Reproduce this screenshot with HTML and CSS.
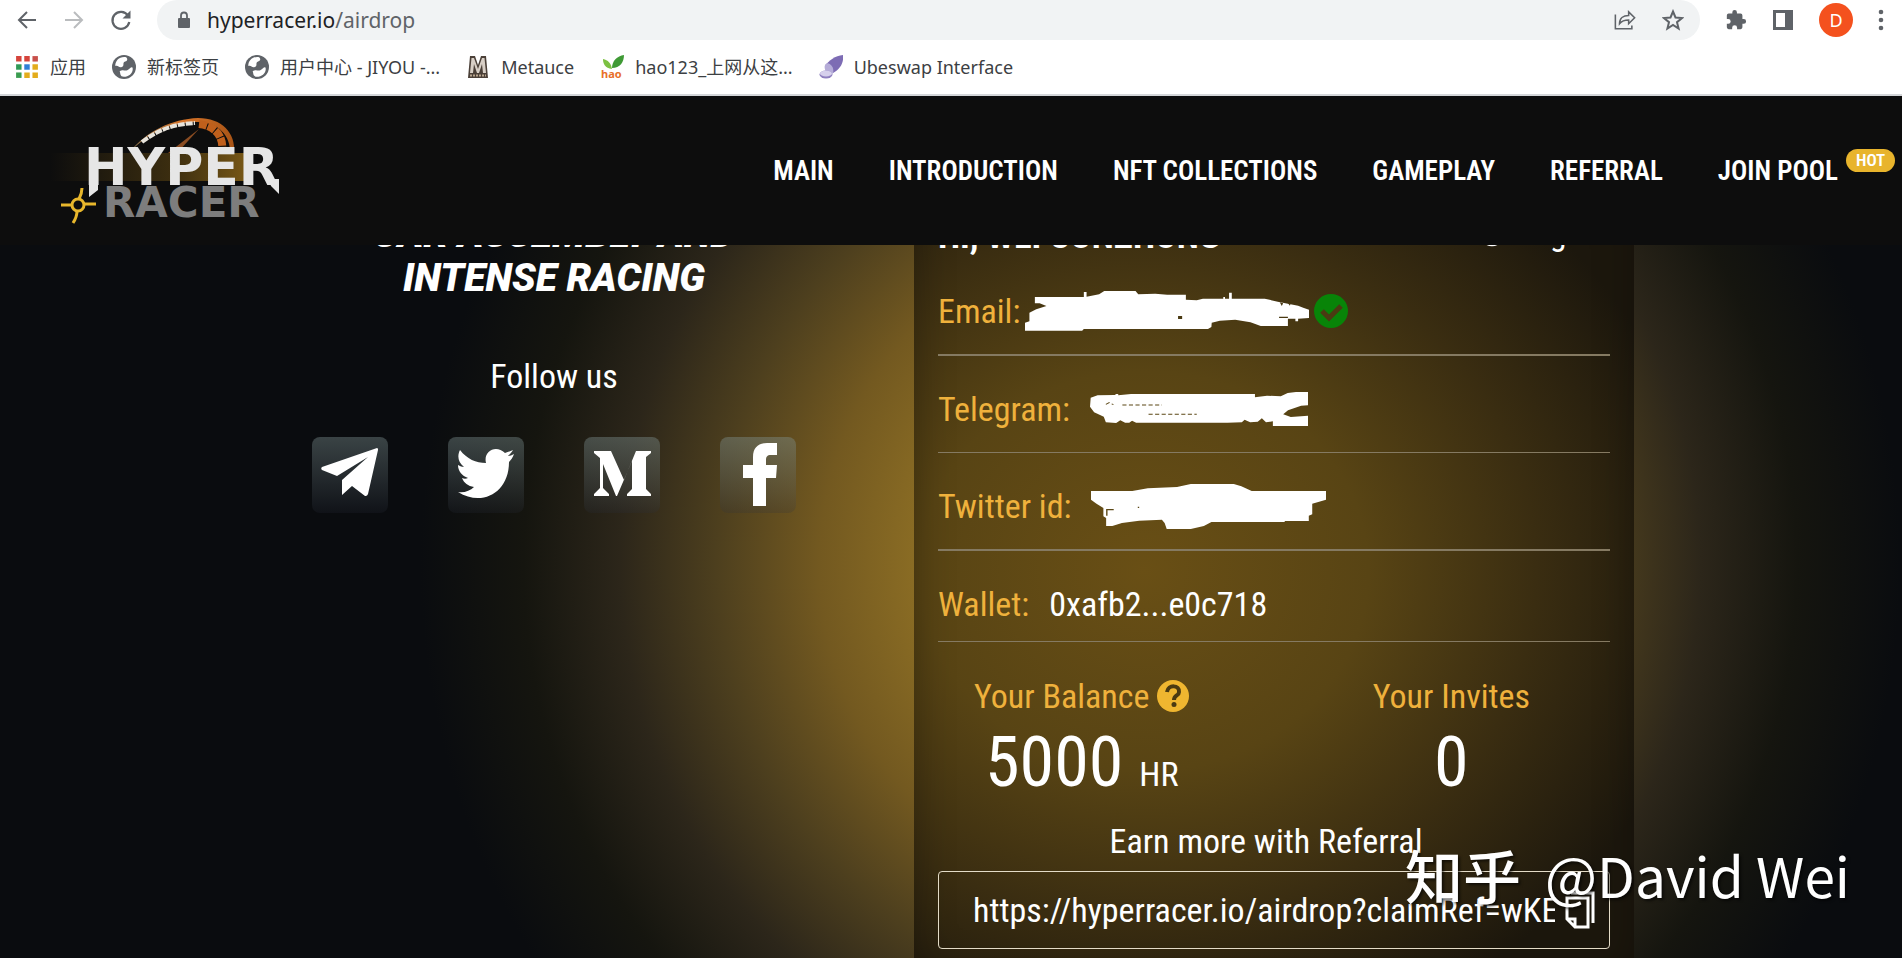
FILE: index.html
```html
<!DOCTYPE html>
<html lang="en">
<head>
    <meta charset="UTF-8">
    <meta name="viewport" content="width=device-width, initial-scale=1.0">
    <title>Hyper Racer Airdrop</title>
    <link rel="stylesheet" href="styles.css">
</head>
<body>

    <div class="browser">
        <div class="toolbar">
            <button class="tool" aria-label="Back">
                <svg viewBox="0 0 22 22" fill="none" stroke="#5f6368" stroke-width="2"><path d="M20 11H3M11 3L3 11l8 8"/></svg>
            </button>
            <button class="tool" aria-label="Forward">
                <svg viewBox="0 0 22 22" fill="none" stroke="#babcbe" stroke-width="2"><path d="M2 11h17M11 3l8 8-8 8"/></svg>
            </button>
            <button class="tool" aria-label="Reload">
                <svg viewBox="0 0 22 22"><path d="M18 6.500A8.500 8.500 0 1 0 19.300 13" fill="none" stroke="#5f6368" stroke-width="2.200"/><path d="M20.500 1.500v8h-8z" fill="#5f6368"/></svg>
            </button>
            <div class="address">
                <svg class="lock" viewBox="0 0 14 18"><rect x="1" y="7" width="12" height="10" rx="1" fill="#5f6368"/><path d="M4 7V4.500a3 3 0 0 1 6 0V7" fill="none" stroke="#5f6368" stroke-width="1.800"/></svg>
                <span class="url">hyperracer.io<span class="path">/airdrop</span></span>
                <button class="tool" aria-label="Share">
                    <svg viewBox="0 0 24 22" fill="none" stroke="#5f6368" stroke-width="1.700"><path d="M1.500 5v15.500h18V17M6 15c0-6 4-9 10-9V2l6.500 6.500L16 15v-4c-5 0-7.500 1-10 4z"/></svg>
                </button>
                <button class="tool" aria-label="Bookmark this page">
                    <svg viewBox="0 0 22 22" fill="none" stroke="#5f6368" stroke-width="2"><path d="M11 2.500l2.500 6 6.500.5-5 4.200 1.600 6.300L11 16l-5.600 3.500L7 13.200 2 9l6.500-.5z"/></svg>
                </button>
            </div>
            <button class="tool" aria-label="Extensions">
                <svg viewBox="0 0 24 24" fill="#5f6368"><path d="M20.500 11H19V7a2 2 0 0 0-2-2h-4V3.500a2.500 2.500 0 0 0-5 0V5H4a2 2 0 0 0-2 2v3.800h1.500a2.700 2.700 0 0 1 0 5.400H2V20a2 2 0 0 0 2 2h3.800v-1.500a2.700 2.700 0 0 1 5.400 0V22H17a2 2 0 0 0 2-2v-4h1.500a2.500 2.500 0 0 0 0-5z"/></svg>
            </button>
            <button class="tool" aria-label="Side panel">
                <svg viewBox="0 0 22 22"><path d="M1 1h20v20H1z" fill="#5f6368"/><path d="M4 4h9v14H4z" fill="#fff"/></svg>
            </button>
            <button class="avatar">D</button>
            <button class="dots" aria-label="Menu">
                <svg viewBox="0 0 6 22" fill="#5f6368"><circle cx="3" cy="3" r="2.300"/><circle cx="3" cy="11" r="2.300"/><circle cx="3" cy="19" r="2.300"/></svg>
            </button>
        </div>

        <div class="bookmarks">
            <a href="#">
                <svg viewBox="0 0 22 22"><path d="M1 1h5v5H1zM8.500 1h5v5h-5z" fill="#d5443c"/><path d="M16 1h5v5h-5z" fill="#c8504a"/><path d="M1 8.500h5v5H1z" fill="#2f9a57"/><path d="M8.500 8.500h5v5h-5z" fill="#2f7fd6"/><path d="M16 8.500h5v5h-5zM16 16h5v5h-5zM8.500 16h5v5h-5z" fill="#e3ac1c"/><path d="M1 16h5v5H1z" fill="#3a9c50"/></svg>
                应用
            </a>
            <a href="#">
                <svg viewBox="0 0 22 22"><circle cx="11" cy="11" r="11" fill="#5f6368"/><path d="M3 10c3-1 3 2 6 1s0-4 3-5 2-3 1-4C7 1 3 5 3 10zM7 15c3-2 5 0 7-1s5-5 5-1-4 7-8 7-3-3-4-5z" fill="#fff"/></svg>
                新标签页
            </a>
            <a href="#">
                <svg viewBox="0 0 22 22"><circle cx="11" cy="11" r="11" fill="#5f6368"/><path d="M3 10c3-1 3 2 6 1s0-4 3-5 2-3 1-4C7 1 3 5 3 10zM7 15c3-2 5 0 7-1s5-5 5-1-4 7-8 7-3-3-4-5z" fill="#fff"/></svg>
                用户中心 - JIYOU -...
            </a>
            <a href="#">
                <svg viewBox="0 0 22 24"><path d="M3 1h5l3 9 3-9h5l2 22H1z" fill="#4b4038"/><path d="M4.500 3H7l4 11 4-11h2.500L19 18h-3l-1-9-3 9h-2L7 9l-1 9H3z" fill="#d8cfc6"/><path d="M3 20.500h16" stroke="#b9a58e" stroke-width="2" stroke-dasharray="2 1"/></svg>
                Metauce
            </a>
            <a href="#">
                <svg viewBox="0 0 24 24"><path d="M12 13C12 6 17 1 24 0c0 7-4 13-12 13z" fill="#3f9a35"/><path d="M12 14C5 13 3 9 3 4c5 1 8 4 9 10z" fill="#7cc142"/><text class="hao" x="1" y="23">hao</text></svg>
                hao123_上网从这...
            </a>
            <a href="#">
                <svg viewBox="0 0 24 24"><path d="M24 0c1 8-3 14-10 18L6 11C10 5 16 1 24 0z" fill="#7d6cb4"/><ellipse cx="10" cy="14" rx="4" ry="6" transform="rotate(-25 10 14)" fill="#b5acd8"/><ellipse cx="7" cy="19.500" rx="6.500" ry="4" fill="#8f80bf"/><ellipse cx="7" cy="18.500" rx="6" ry="3" fill="#d6d0ec"/></svg>
                Ubeswap Interface
            </a>
        </div>
    </div>

    <header class="site-header">
        <a class="logo" href="#" aria-label="Hyper Racer">
            <svg viewBox="0 0 240 116" width="240" height="116">
                <defs>
                    <linearGradient id="stripe"><stop offset="0" stop-color="#8a6414" stop-opacity="0"/><stop offset=".6" stop-color="#8a6414" stop-opacity=".6"/><stop offset="1" stop-color="#c08a1c"/></linearGradient>
                    <linearGradient id="gauge"><stop offset="0" stop-color="#7a6a4a"/><stop offset=".5" stop-color="#d9762a"/><stop offset="1" stop-color="#a85416"/></linearGradient>
                </defs>
                <path d="M0 40h196v28H0z" fill="url(#stripe)" opacity=".6"/>
                <path d="M79 40C96 18 122 6 148 5c24 0 38 15 36 35h-4c1-17-12-31-32-31-24 0-48 9-69 31z" fill="url(#gauge)"/>
                <path d="M92 29c17-13 33-18 53-19" fill="none" stroke="#e8e4dc" stroke-width="4" stroke-dasharray="7 1"/>
                <path d="M149 11c17 2 25 13 23 28" fill="none" stroke="#c0601c" stroke-width="8" stroke-dasharray="8 1"/>
                <path d="M149 16l-22 24h-9z" fill="#8a4c22"/>
                <path d="M39 60h9v17l-9 7zM218 66h11v15l-8-8z" fill="#e6e6e6"/>
                <text class="logo-top" x="34" y="72">HYPER</text>
                <text class="logo-bottom" x="53" y="104">RACER</text>
                <g fill="none" stroke="#e8b72c" stroke-width="3"><circle cx="28" cy="92" r="6"/><path d="M29 86c2-4 3-7 3-11M34 91h12M27 98c0 4-2 9-4 12M22 92H11"/></g>
            </svg>
        </a>
        <nav class="menu">
            <a href="#">MAIN</a>
            <a href="#">INTRODUCTION</a>
            <a href="#">NFT COLLECTIONS</a>
            <a href="#">GAMEPLAY</a>
            <a href="#">REFERRAL</a>
            <a href="#" class="join">JOIN POOL<span class="hot">HOT</span></a>
        </nav>
    </header>

    <main class="hero">
        <div class="container">
            <section class="intro">
                <h1>CAR ASSEMBLY AND<br>INTENSE RACING</h1>
                <p class="follow">Follow us</p>
                <div class="socials">
                    <a href="#" aria-label="Telegram">
                        <svg viewBox="0 0 76 76" fill="#fff"><path d="M65 11L10 30c-1 1-1 2 0 3l15 6 31-19-26 23v15l10-9 13 10c1 0 2 0 3-2l10-44c0-1 0-2-1-2z"/></svg>
                    </a>
                    <a href="#" aria-label="Twitter">
                        <svg viewBox="0 0 76 76" fill="#fff"><path d="M66 17c-2 1-4 2-6 2 2-2 4-4 5-6-2 1-5 2-8 3-9-9-22-2-19 10-10 0-19-4-26-13-3 6-2 12 4 17-2 0-4-1-6-2 0 6 4 11 10 13-2 1-4 1-6 0 2 5 6 8 12 9-4 4-10 6-16 5 24 15 51 1 51-30 2-2 4-5 5-8z"/></svg>
                    </a>
                    <a href="#" aria-label="Medium">
                        <svg viewBox="0 0 76 76" fill="#fff"><path d="M10 14h17l13 29 12-29h15v2l-5 4v32l5 5v2H43v-2l5-5V24L33 59h-1L19 27v24l6 6v2H10v-2l6-6V21l-6-5z"/></svg>
                    </a>
                    <a href="#" aria-label="Facebook">
                        <svg viewBox="0 0 76 76" fill="#fff"><path d="M33 69V41H23V28h10V20C33 10 39 6 47 6h10v12h-6c-4 0-5 2-5 5v5h11l-1 13H46v28z"/></svg>
                    </a>
                </div>
            </section>

            <section class="card">
                <div class="card-head">
                    <h2>HI, WEI CONZHONG</h2>
                    <button class="logout">
                        <svg viewBox="0 0 32 32" width="28" height="28" fill="none" stroke="#fff" stroke-width="3"><path d="M10 5a13 13 0 1 0 12 0M16 1v14"/></svg>
                        Logout
                    </button>
                </div>

                <div class="row email">
                    <span class="label">Email:</span>
                    <svg class="mark" viewBox="357 195 835 123" width="284" height="41" preserveAspectRatio="none" fill="#fff"><path d="M386 213H530V198h8v14l37-7 15-10h92l8 10 50-2 35 3h55v15l32 2 18-5h60v-5h5v5h12v-18h8v18h97l38 9 60 12 15 6 17 6v25l-32 2v8h-8v-8h-22v22h-80l-30-11-45-8-45 3-24 6-1 13-10 6H530l-5 5H357v-24l13-4v-26l20-10 30-10-20-8h-14z"/><path d="M807 270h12v9h-12zM1104 272h26v4h-26zM1106 229l10 3-4 8zM1128 229l10 2-2 8z" fill="#4a3a12"/></svg>
                    <svg viewBox="0 0 34 34" width="34" height="34"><circle cx="17" cy="17" r="17" fill="#088408"/><path d="M8 17l7 7 12-12" fill="none" stroke="#4a3a12" stroke-width="5"/></svg>
                </div>
                <div class="row">
                    <span class="label">Telegram:</span>
                    <svg class="mark" viewBox="546 483 633 105" width="218" height="35" preserveAspectRatio="none" fill="#fff"><path d="M548 500l20-7 50-1 4-3h6v4l37-4h360v10l35-5 40 2 20-10 24-3h65v25l-20 14-30 2-38 14-14 12 22 8 52-4v-4h50v28l-12 7h-142v-14l-20 3-12-12-12 10-22 2-16-8-8 8-42 1H680l-12-6-8 6h-12l-14-7-12 8-30-2-6-17-28-13-12-17z"/><path d="M592 520l10-5 12 6M640 522h115M716 550h140" fill="none" stroke="#5b4715" stroke-width="3" stroke-dasharray="12 7"/></svg>
                </div>
                <div class="row">
                    <span class="label">Twitter id:</span>
                    <svg class="mark" viewBox="560 69 683 135" width="235" height="45" preserveAspectRatio="none" fill="#fff"><path d="M560 90h120l45-8 85-4 40-9h125l22 7 30 14h216v26l-20 6-20 6v32l-10 4v16h-70v3H910l-22 12-38 9h-70l-6-18-8-10-66 3-50 7-28 9h-18v-24l-8-5v-25l-20-13-16-12z"/><path d="M606 164v-18h20M696 139h4" fill="none" stroke="#5b4715" stroke-width="4"/></svg>
                </div>
                <div class="row wallet">
                    <span class="label">Wallet:</span>
                    <span>0xafb2...e0c718</span>
                </div>

                <div class="stats">
                    <div class="stat">
                        <div class="stat-label">Your Balance
                            <svg viewBox="0 0 32 32" width="32" height="32"><circle cx="16" cy="16" r="16" fill="#efb630"/><path d="M10 12c1-8 13-7 12 0 0 4-5 3-5 8" fill="none" stroke="#4a3a12" stroke-width="4"/><circle cx="17" cy="24.500" r="2.500" fill="#4a3a12"/></svg>
                        </div>
                        <div class="stat-value">5000 <small>HR</small></div>
                    </div>
                    <div class="stat">
                        <div class="stat-label">Your Invites</div>
                        <div class="stat-value">0</div>
                    </div>
                </div>

                <label class="earn" for="ref">Earn more with Referral</label>
                <div class="ref-box">
                    <input type="text" id="ref" value="https://hyperracer.io/airdrop?claimRef=wKE" readonly>
                    <button class="copy" aria-label="Copy link">
                        <svg viewBox="0 0 30 38" width="30" height="38" fill="none" stroke="#fff" stroke-width="3"><path d="M2 7h21v29H10l-8-8zM2 28h8v8M6 2h22v30"/></svg>
                    </button>
                </div>
            </section>
        </div>
    </main>

    <div class="watermark"><span class="zhihu">知乎</span><span>@David Wei</span></div>

</body>
</html>
```
FILE: styles.css
```css
* {
    margin: 0;
    padding: 0;
    box-sizing: border-box;
}

body {
    display: flex;
    flex-direction: column;
    height: 100vh;
    overflow: hidden;
    background-color: #0a0c0f;
    color: #fff;
    font-family: "Roboto Condensed", Roboto, sans-serif;
    font-size: 34px;
    line-height: 48px;
}

a {
    color: inherit;
    text-decoration: none;
}

button {
    background: none;
    border: none;
    color: inherit;
    font: inherit;
    cursor: pointer;
}

svg {
    display: block;
    flex: none;
}

/* Browser bar */
.browser {
    position: relative;
    z-index: 2;
    background-color: #fff;
    border-bottom: 2px solid #d4d6d9;
    font-family: "Noto Sans", "Noto Sans CJK SC", sans-serif;
    font-size: 18px;
    line-height: 24px;
    color: #3c4043;
}

.toolbar {
    display: flex;
    align-items: center;
    gap: 25px;
    height: 40px;
    padding: 0 18px 0 16px;
}

.tool {
    width: 22px;
    height: 22px;
}

.address {
    flex: 1;
    display: flex;
    align-items: center;
    gap: 26px;
    height: 40px;
    padding: 0 16px 0 20px;
    background-color: #f1f3f4;
    border-radius: 20px;
}

.lock {
    width: 14px;
    height: 18px;
    margin-right: -10px;
}

.url {
    flex: 1;
    font-size: 21px;
    color: #202124;
}

.path {
    color: #5f6368;
}

.avatar {
    width: 34px;
    height: 34px;
    border-radius: 50%;
    background-color: #f4511e;
    color: #fff;
    font-size: 18px;
}

.dots {
    width: 6px;
    height: 22px;
}

.bookmarks {
    display: flex;
    align-items: center;
    gap: 26px;
    height: 54px;
    padding: 0 15px;
}

.bookmarks a {
    display: flex;
    align-items: center;
    gap: 11px;
    white-space: nowrap;
}

.bookmarks svg {
    width: 24px;
    height: 24px;
}

.hao {
    font-size: 11px;
    font-weight: bold;
    fill: #e8702a;
}

/* Header */
.site-header {
    position: relative;
    z-index: 2;
    display: flex;
    align-items: center;
    justify-content: space-between;
    height: 149px;
    padding: 0 64px 0 50px;
    background-color: #0d0d0d;
}

.logo-top,
.logo-bottom {
    font-family: "DejaVu Sans", sans-serif;
    font-weight: bold;
}

.logo-top {
    font-size: 52px;
    fill: #e6e6e6;
}

.logo-bottom {
    font-size: 42px;
    fill: #7d7d7d;
}

.menu {
    display: flex;
    gap: 55px;
    font-size: 27px;
    font-weight: 600;
}

.join {
    position: relative;
}

.hot {
    position: absolute;
    left: 100%;
    top: 2px;
    margin-left: 8px;
    padding: 0 10px;
    border-radius: 12px;
    background-color: #e8b42c;
    font-size: 17px;
    line-height: 23px;
}

/* Hero, slides under the header */
.hero {
    flex: 1;
    min-height: 0;
    margin-top: -45px;
    background: radial-gradient(ellipse 740px 740px at 61% 48%, #a98325 0%, #8a6c24 33%, #735920 46%, #4d3f1e 60%, #2c261a 73%, #15150f 86%, #0a0c0f 100%);
}

.container {
    display: grid;
    grid-template-columns: 1fr 720px;
    gap: 74px;
    max-width: 1366px;
    height: 100%;
    margin: 0 auto;
}

.intro {
    padding-top: 12px;
    text-align: center;
}

h1 {
    font-family: Roboto, sans-serif;
    font-size: 39px;
    font-weight: 900;
    font-style: italic;
    line-height: 44px;
}

.follow {
    margin-top: 52px;
}

.socials {
    display: flex;
    justify-content: center;
    gap: 60px;
    margin-top: 37px;
}

.socials a {
    border-radius: 8px;
    background: linear-gradient(rgba(130, 150, 150, 0.4), rgba(40, 45, 60, 0.2));
}

.socials svg {
    width: 76px;
    height: 76px;
}

/* Account card */
.card {
    padding: 16px 24px 24px;
    background: radial-gradient(ellipse 560px 500px at 32% 48%, #694f15 0%, #584414 40%, #3a2d11 70%, #1c170d 100%);
    box-shadow: inset 0 0 40px rgba(0, 0, 0, 0.3);
}

.card-head {
    display: flex;
    align-items: center;
    justify-content: space-between;
    height: 40px;
    margin-bottom: 2px;
}

h2 {
    font-size: 36px;
    font-weight: bold;
}

.logout {
    display: flex;
    align-items: center;
    gap: 10px;
    padding-bottom: 6px;
}

.row {
    display: flex;
    align-items: center;
    gap: 20px;
    padding: 29px 0 19px;
    border-bottom: 1px solid #857a62;
    height: 97px;
}

.row:nth-child(even) {
    border-bottom-width: 2px;
    height: 98px;
}

.row.email {
    gap: 5px;
}

.row.wallet {
    height: 91px;
    padding-bottom: 13px;
}

.label,
.stat-label {
    color: #efb13c;
}

.stats {
    display: flex;
    justify-content: space-between;
    padding: 30px 80px 0 36px;
    text-align: center;
}

.stat-label {
    display: flex;
    align-items: center;
    gap: 8px;
}

.stat-value {
    font-size: 70px;
    line-height: 84px;
}

small {
    font-size: 34px;
    line-height: 34px;
}

.earn {
    display: block;
    margin-top: 13px;
    padding-right: 16px;
    text-align: center;
}

.ref-box {
    display: flex;
    align-items: center;
    gap: 10px;
    height: 78px;
    margin-top: 6px;
    padding: 0 14px 0 34px;
    border: 1px solid #e4dcc8;
    border-radius: 4px;
}

.ref-box input {
    flex: 1;
    min-width: 0;
    background: none;
    border: none;
    outline: none;
    color: inherit;
    font: inherit;
}

.watermark {
    position: absolute;
    z-index: 3;
    right: 52px;
    bottom: 56px;
    display: flex;
    gap: 24px;
    font-family: "Noto Sans CJK SC", sans-serif;
    font-size: 55px;
    line-height: 56px;
    text-shadow: 2px 2px 3px rgba(0, 0, 0, 0.6);
}

.zhihu {
    font-size: 58px;
    font-weight: 500;
}
```
